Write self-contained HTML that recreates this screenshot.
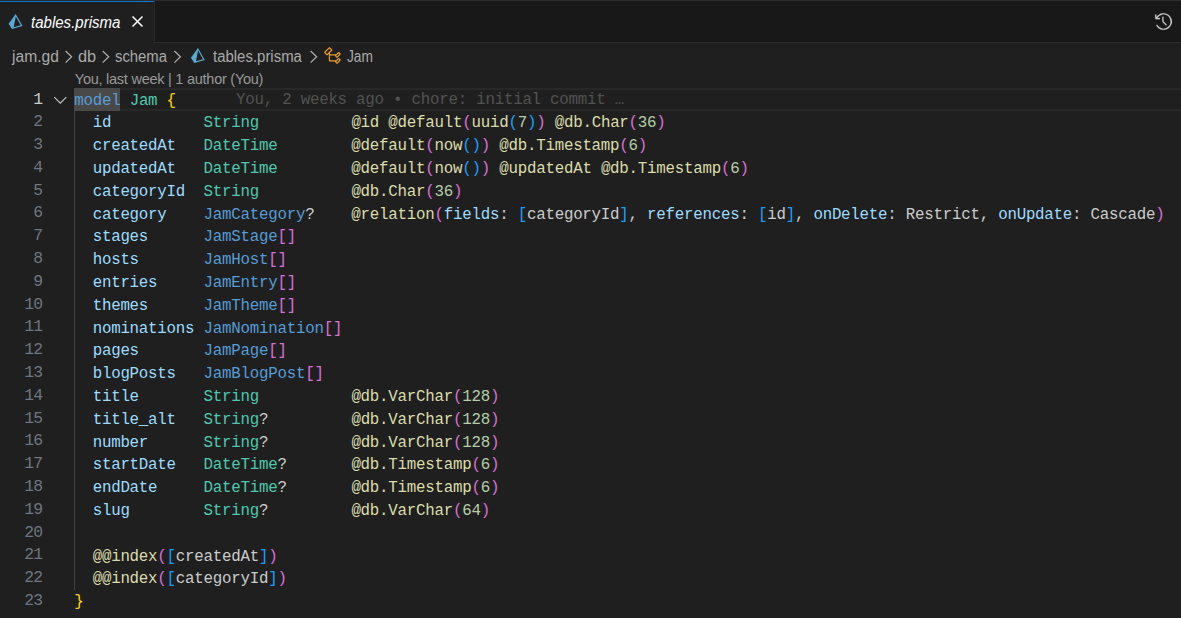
<!DOCTYPE html>
<html><head><meta charset="utf-8">
<style>
*{margin:0;padding:0;box-sizing:border-box}
html,body{width:1181px;height:618px;overflow:hidden;background:#1f1f1f}
body{position:relative;font-family:"Liberation Sans",sans-serif}
.a{position:absolute}
#topline{left:0;top:0;width:1181px;height:1px;background:#2b2b2b}
#tabbar{left:0;top:1px;width:1181px;height:41px;background:#181818}
#tabbarb{left:0;top:42px;width:1181px;height:1px;background:#2b2b2b}
#tab{left:0;top:1px;width:154px;height:42px;background:#1f1f1f;border-top:1px solid #0078d4}
#tabr{left:154px;top:0;width:1px;height:42px;background:#2b2b2b}
#tabtitle{left:31px;top:15.4px;font-style:italic;font-size:16px;line-height:16px;transform:scaleX(0.94);transform-origin:0 0;color:#ffffff;white-space:nowrap}
.bct{top:49.2px;transform-origin:0 0;font-size:15.6px;line-height:15.6px;color:#a9a9a9;white-space:nowrap}
#lens{left:74.8px;top:71.5px;font-size:14.5px;line-height:14.5px;letter-spacing:-0.25px;color:#999999;white-space:nowrap}
#hl{left:74px;top:88px;width:1107px;height:23px;border-top:2px solid #282828;border-bottom:2px solid #282828}
#sel{left:74px;top:88px;width:46px;height:23px;background:#494949}
.ig{width:1px;background:#404040}
.code{position:absolute;font-family:"Liberation Mono",monospace;font-size:15.8px;letter-spacing:-0.2415px;line-height:22.8px}
.ln{height:22.8px;white-space:pre}
#gutter{left:0;top:88.5px;width:42.5px;font-size:16.4px;letter-spacing:-0.68px;text-align:right;color:#6e7681}
#lines{left:74.2px;top:89.6px;color:#cccccc}
#blame{left:236px;top:88.8px;color:#525252;white-space:pre}
.k{color:#569cd6}.t{color:#4ec9b0}.f{color:#9cdcfe}.y{color:#dcdcaa}.n{color:#b5cea8}
.b1{color:#ffd700}.b2{color:#da70d6}.b3{color:#179fff}.d{color:#cccccc}
svg{position:absolute;overflow:visible}
</style></head><body>
<div class="a" id="topline"></div>
<div class="a" id="tabbar"></div>
<div class="a" id="tabbarb"></div>
<div class="a" id="tab"></div>
<div class="a" id="tabr"></div>
<svg style="left:0;top:0" width="30" height="40"><g transform="translate(-182.3,-34)"><polygon points="198,47.9 190.9,57.8 194.3,63 204.8,59.9" fill="#57a9d0"/><polygon points="198.08,50.46 196.03,61.24 203.02,59.18" fill="#1f1f1f"/></g></svg>
<div class="a" id="tabtitle">tables.prisma</div>
<svg style="left:0;top:0" width="150" height="40"><path d="M132.5 16.5L142.5 26.5M142.5 16.5L132.5 26.5" stroke="#ffffff" stroke-width="1.5" fill="none"/></svg>
<svg style="left:1154.4px;top:12.1px" width="19" height="19" viewBox="0 0 16 16"><path fill="#cccccc" stroke="#cccccc" stroke-width="0.12" fill-rule="evenodd" clip-rule="evenodd" d="M13.507 12.324a7 7 0 0 0 .065-8.56A7 7 0 0 0 2 4.393V2H1v3.5l.5.5H5V5H2.811a6.008 6.008 0 1 1-.135 5.77l-.887.462a7 7 0 0 0 11.718 1.092zm-3.361-.97l.708-.707L8 7.792V4H7v4l.146.354 3 3z"/></svg>
<div class="a bct" style="left:12px">jam.gd</div>
<div class="a bct" style="left:78.2px;transform:scaleX(1.05)">db</div>
<div class="a bct" style="left:115.1px;transform:scaleX(0.951)">schema</div>
<div class="a bct" style="left:213.4px;transform:scaleX(0.959)">tables.prisma</div>
<div class="a bct" style="left:346.5px;transform:scaleX(0.88)">Jam</div>
<svg style="left:0;top:0" width="400" height="70"><g stroke="#a9a9a9" stroke-width="1.3" fill="none"><path d="M65.6 51L71.6 56.8L65.6 62.6"/><path d="M102.7 51L108.7 56.8L102.7 62.6"/><path d="M174.4 51L180.4 56.8L174.4 62.6"/><path d="M310.6 51L316.6 56.8L310.6 62.6"/></g>
<polygon points="198,47.9 190.9,57.8 194.3,63 204.8,59.9" fill="#57a9d0"/><polygon points="198.08,50.46 196.03,61.24 203.02,59.18" fill="#1f1f1f"/></svg>
<svg style="left:322.5px;top:45.5px" width="19.2" height="19.2" viewBox="0 0 16 16"><path fill="#ee9d28" d="M11.34 9.71h.71l2.67-2.670v-.71L13.38 5h-.7l-1.82 1.81h-5V5.56l1.86-1.85V3l-2-2H5L1 5v.71l2 2h.71l1.14-1.15v5.79l.5.5H10v.52l1.33 1.34h.71l2.67-2.67v-.71L13.37 10h-.7l-1.860 1.85h-5v-4H10v.48l1.34 1.38zm1.69-3.65l.63.63-2 2-.63-.63 2-2zm0 5l.63.63-2 2-.63-.63 2-2zM3.35 6.650l-1.29-1.3 3.29-3.29 1.3 1.29-3.3 3.3z"/></svg>
<div class="a" id="lens">You, last week | 1 author (You)</div>
<div class="a" id="hl"></div>
<div class="a" id="sel"></div>
<div class="a ig" style="left:74px;top:111px;height:479px"></div>
<svg style="left:0;top:0" width="70" height="110"><path d="M54.3 97.2L60.3 103.2L66.3 97.2" stroke="#c5c5c5" stroke-width="1.2" fill="none"/></svg>
<div class="code" id="gutter"><div class="ln" style="color:#cccccc">1</div><div class="ln">2</div><div class="ln">3</div><div class="ln">4</div><div class="ln">5</div><div class="ln">6</div><div class="ln">7</div><div class="ln">8</div><div class="ln">9</div><div class="ln">10</div><div class="ln">11</div><div class="ln">12</div><div class="ln">13</div><div class="ln">14</div><div class="ln">15</div><div class="ln">16</div><div class="ln">17</div><div class="ln">18</div><div class="ln">19</div><div class="ln">20</div><div class="ln">21</div><div class="ln">22</div><div class="ln">23</div></div>
<div class="code" id="lines"><div class="ln"><span class="k">model</span> <span class="t">Jam</span> <span class="b1">{</span></div><div class="ln">  <span class="f">id</span>          <span class="t">String</span>          <span class="y">@id</span> <span class="y">@default</span><span class="b2">(</span><span class="y">uuid</span><span class="b3">(</span><span class="n">7</span><span class="b3">)</span><span class="b2">)</span> <span class="y">@db.Char</span><span class="b2">(</span><span class="n">36</span><span class="b2">)</span></div><div class="ln">  <span class="f">createdAt</span>   <span class="t">DateTime</span>        <span class="y">@default</span><span class="b2">(</span><span class="y">now</span><span class="b3">(</span><span class="b3">)</span><span class="b2">)</span> <span class="y">@db.Timestamp</span><span class="b2">(</span><span class="n">6</span><span class="b2">)</span></div><div class="ln">  <span class="f">updatedAt</span>   <span class="t">DateTime</span>        <span class="y">@default</span><span class="b2">(</span><span class="y">now</span><span class="b3">(</span><span class="b3">)</span><span class="b2">)</span> <span class="y">@updatedAt</span> <span class="y">@db.Timestamp</span><span class="b2">(</span><span class="n">6</span><span class="b2">)</span></div><div class="ln">  <span class="f">categoryId</span>  <span class="t">String</span>          <span class="y">@db.Char</span><span class="b2">(</span><span class="n">36</span><span class="b2">)</span></div><div class="ln">  <span class="f">category</span>    <span class="k">JamCategory</span><span class="d">?</span>    <span class="y">@relation</span><span class="b2">(</span><span class="f">fields</span><span class="d">: </span><span class="b3">[</span><span class="d">categoryId</span><span class="b3">]</span><span class="d">, </span><span class="f">references</span><span class="d">: </span><span class="b3">[</span><span class="d">id</span><span class="b3">]</span><span class="d">, </span><span class="f">onDelete</span><span class="d">: Restrict, </span><span class="f">onUpdate</span><span class="d">: Cascade</span><span class="b2">)</span></div><div class="ln">  <span class="f">stages</span>      <span class="k">JamStage</span><span class="b2">[</span><span class="b2">]</span></div><div class="ln">  <span class="f">hosts</span>       <span class="k">JamHost</span><span class="b2">[</span><span class="b2">]</span></div><div class="ln">  <span class="f">entries</span>     <span class="k">JamEntry</span><span class="b2">[</span><span class="b2">]</span></div><div class="ln">  <span class="f">themes</span>      <span class="k">JamTheme</span><span class="b2">[</span><span class="b2">]</span></div><div class="ln">  <span class="f">nominations</span> <span class="k">JamNomination</span><span class="b2">[</span><span class="b2">]</span></div><div class="ln">  <span class="f">pages</span>       <span class="k">JamPage</span><span class="b2">[</span><span class="b2">]</span></div><div class="ln">  <span class="f">blogPosts</span>   <span class="k">JamBlogPost</span><span class="b2">[</span><span class="b2">]</span></div><div class="ln">  <span class="f">title</span>       <span class="t">String</span>          <span class="y">@db.VarChar</span><span class="b2">(</span><span class="n">128</span><span class="b2">)</span></div><div class="ln">  <span class="f">title_alt</span>   <span class="t">String</span><span class="d">?</span>         <span class="y">@db.VarChar</span><span class="b2">(</span><span class="n">128</span><span class="b2">)</span></div><div class="ln">  <span class="f">number</span>      <span class="t">String</span><span class="d">?</span>         <span class="y">@db.VarChar</span><span class="b2">(</span><span class="n">128</span><span class="b2">)</span></div><div class="ln">  <span class="f">startDate</span>   <span class="t">DateTime</span><span class="d">?</span>       <span class="y">@db.Timestamp</span><span class="b2">(</span><span class="n">6</span><span class="b2">)</span></div><div class="ln">  <span class="f">endDate</span>     <span class="t">DateTime</span><span class="d">?</span>       <span class="y">@db.Timestamp</span><span class="b2">(</span><span class="n">6</span><span class="b2">)</span></div><div class="ln">  <span class="f">slug</span>        <span class="t">String</span><span class="d">?</span>         <span class="y">@db.VarChar</span><span class="b2">(</span><span class="n">64</span><span class="b2">)</span></div><div class="ln"></div><div class="ln">  <span class="y">@@index</span><span class="b2">(</span><span class="b3">[</span><span class="d">createdAt</span><span class="b3">]</span><span class="b2">)</span></div><div class="ln">  <span class="y">@@index</span><span class="b2">(</span><span class="b3">[</span><span class="d">categoryId</span><span class="b3">]</span><span class="b2">)</span></div><div class="ln"><span class="b1">}</span></div></div>
<div class="code" id="blame">You, 2 weeks ago • chore: initial commit …</div>
</body></html>
